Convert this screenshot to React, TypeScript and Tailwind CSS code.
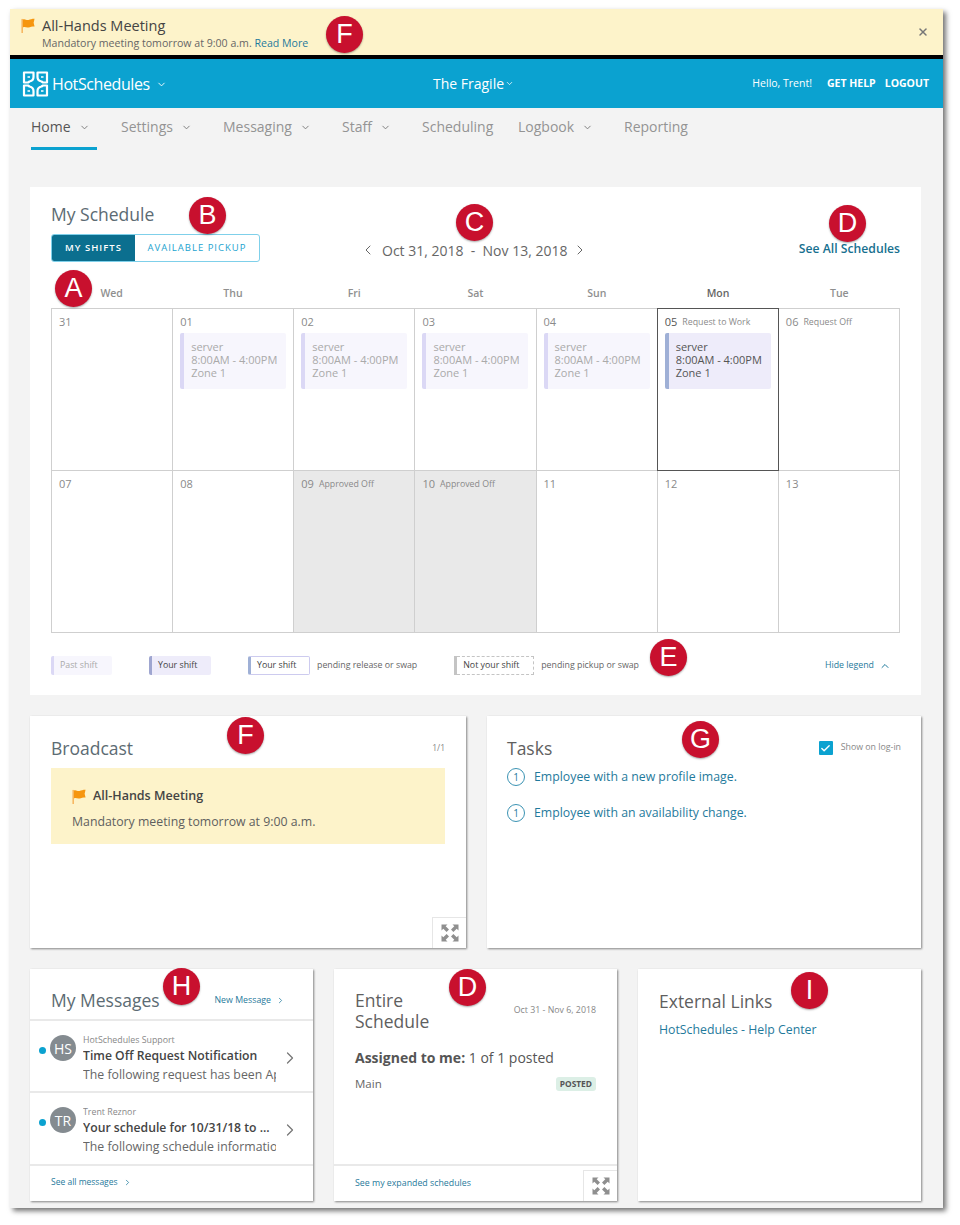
import React from 'react';
import { ChevronDown, ChevronUp, ChevronLeft, ChevronRight, X, Check } from 'lucide-react';

const Badge = ({ label, className }: { label: string; className: string }) => (
    <div className={`absolute flex h-[37px] w-[37px] items-center justify-center rounded-full bg-[#c8102e] text-[27px] leading-none text-white shadow-[0_1px_2px_rgba(0,0,0,0.35)] font-['Liberation_Sans',sans-serif] ${className}`}>
        {label}
    </div>
);

const Flag = ({ className }: { className: string }) => (
    <svg viewBox="0 0 14 16" className={className}>
        <rect x="0" y="1" width="1.6" height="15" fill="#f7b45c" />
        <path d="M1.6 1.5 C4 0.5 5 2.5 7.5 2 C9.5 1.6 11 0.8 14 0.8 L13 5 L14 9 C11 9 9.5 9.6 7.5 10 C5 10.5 4 9 1.6 10 Z" fill="#f6960f" />
    </svg>
);

const Logo = () => (
    <svg viewBox="0 0 26 26" className="h-[26px] w-[27px]" fill="none" stroke="#fff" strokeWidth="2.2" strokeLinejoin="round">
        <path d="M1.5 1.5 H11 V6 C11 8.5 9.5 10 7 10.5 L5.5 11.5 H1.5 Z" />
        <path d="M24.5 1.5 H15 V6 C15 8.5 16.5 10 19 10.5 L20.5 11.5 H24.5 Z" />
        <path d="M1.5 24.5 H11 V20 C11 17.5 9.5 16 7 15.5 L5.5 14.5 H1.5 Z" />
        <path d="M24.5 24.5 H15 V20 C15 17.5 16.5 16 19 15.5 L20.5 14.5 H24.5 Z" />
        <path d="M5 6 H7.5 M21 6 H18.5 M5 20 H7.5 M21 20 H18.5" strokeWidth="1.6" />
    </svg>
);

const Expand = () => (
    <svg viewBox="0 0 18 18" className="h-[18px] w-[18px]" fill="#8f8f8f">
        <path d="M0.5 0.5 H6.5 L4.7 2.3 L8 5.6 L5.6 8 L2.3 4.7 L0.5 6.5 Z" />
        <path d="M17.5 0.5 H11.5 L13.3 2.3 L10 5.6 L12.4 8 L15.7 4.7 L17.5 6.5 Z" />
        <path d="M0.5 17.5 H6.5 L4.7 15.7 L8 12.4 L5.6 10 L2.3 13.3 L0.5 11.5 Z" />
        <path d="M17.5 17.5 H11.5 L13.3 15.7 L10 12.4 L12.4 10 L15.7 13.3 L17.5 11.5 Z" />
    </svg>
);

const tabs = [
    { name: 'Home', w: 'w-[90px]', arrow: true },
    { name: 'Settings', w: 'w-[102px]', arrow: true },
    { name: 'Messaging', w: 'w-[119px]', arrow: true },
    { name: 'Staff', w: 'w-[80px]', arrow: true },
    { name: 'Scheduling', w: 'w-[96px]', arrow: false },
    { name: 'Logbook', w: 'w-[106px]', arrow: true },
    { name: 'Reporting', w: 'w-[80px]', arrow: false },
];

type Day = { d: string; note?: string; shift?: boolean; now?: boolean; off?: boolean };

const days: Day[] = [
    { d: '31' },
    { d: '01', shift: true },
    { d: '02', shift: true },
    { d: '03', shift: true },
    { d: '04', shift: true },
    { d: '05', note: 'Request to Work', shift: true, now: true },
    { d: '06', note: 'Request Off' },
    { d: '07' },
    { d: '08' },
    { d: '09', note: 'Approved Off', off: true },
    { d: '10', note: 'Approved Off', off: true },
    { d: '11' },
    { d: '12' },
    { d: '13' },
];

const heads = ['Wed', 'Thu', 'Fri', 'Sat', 'Sun', 'Mon', 'Tue'];

const DayCell = ({ day }: { day: Day }) => (
    <div className={`relative h-[162px] border-b border-r border-[#cfcfcf] px-[7px] pt-[5px] ${day.off ? 'bg-[#e9e9e9]' : 'bg-white'}`}>
        {day.now && <div className="absolute -bottom-px -left-px -right-px -top-px z-10 border border-[#555]" />}
        <div className="flex h-[17px] items-center">
            <span className={`text-[11px] ${day.now ? 'text-[#555]' : 'text-[#8a8a8a]'}`}>{day.d}</span>
            {day.note && <span className="ml-[5px] text-[8.8px] text-[#8a8a8a]">{day.note}</span>}
        </div>
        {day.shift && (
            <div className={`mt-[2px] h-[56px] w-[106px] rounded-[2px] border-l-[4px] pl-[7px] pt-[7px] text-[11px] leading-[13px] ${day.now ? 'border-[#9fb0d6] bg-[#eeecfa] text-[#555]' : 'border-[#dbd8f5] bg-[#f7f6fd] text-[#aaa]'}`}>
                <div>server</div>
                <div>8:00AM - 4:00PM</div>
                <div>Zone 1</div>
            </div>
        )}
    </div>
);

const Message = ({ ini, from, title, body, h }: { ini: string; from: string; title: string; body: string; h: string }) => (
    <div className={`flex items-start border-b-2 border-[#e9e9e9] pl-[9px] pt-[13px] ${h}`}>
        <div className="mt-[13px] h-[7px] w-[7px] shrink-0 rounded-full bg-[#0ba2d0]" />
        <div className="ml-[4px] mt-[1px] flex h-[26px] w-[26px] shrink-0 items-center justify-center rounded-full bg-[#848b90] text-[14px] text-white">{ini}</div>
        <div className="ml-[7px] w-[193px] shrink-0 overflow-hidden">
            <div className="text-[8.8px] leading-[12px] text-[#888]">{from}</div>
            <div className="whitespace-nowrap text-[12.2px] font-semibold leading-[20px] text-[#444]">{title}</div>
            <div className="whitespace-nowrap text-[12.3px] leading-[17px] text-[#666]">{body}</div>
        </div>
        <ChevronRight className="ml-[4px] mt-[14px] h-[20px] w-[20px] shrink-0 text-[#777]" strokeWidth={1.5} />
    </div>
);

export default function App() {
    return (
        <div className="relative h-[1225px] w-[960px] overflow-hidden bg-white pl-[10px] pt-[9px] font-['Open_Sans',sans-serif]">
            <div className="relative h-[1199px] w-[933px] bg-[#f3f3f3] shadow-[3px_3px_5px_rgba(0,0,0,0.55)]">
                <div className="flex h-[46px] items-start justify-between bg-[#fdf3ca] pl-[11px] pr-[14px] pt-[7px]">
                    <div className="flex">
                        <Flag className="mt-[2px] h-[15px] w-[14px]" />
                        <div className="ml-[7px]">
                            <div className="text-[14.5px] leading-[19px] text-[#444]">All-Hands Meeting</div>
                            <div className="mt-px text-[10.6px] leading-[15px] text-[#666]">Mandatory meeting tomorrow at 9:00 a.m. <span className="text-[#1f7a9c]">Read More</span></div>
                        </div>
                    </div>
                    <X className="mt-[10px] h-[12px] w-[12px] text-[#777]" strokeWidth={3} />
                </div>
                <div className="h-[4px] bg-black" />
                <div className="flex h-[49px] items-center bg-[#0ba2d0] pl-[12px] pr-[14px] text-white">
                    <div className="flex w-[411px] items-center">
                        <Logo />
                        <span className="ml-[3px] text-[16px] tracking-[-0.4px]">HotSchedules</span>
                        <ChevronDown className="ml-[6px] mt-[2px] h-[11px] w-[11px]" />
                    </div>
                    <div className="flex items-center text-[14px]">
                        The Fragile
                        <ChevronDown className="ml-[1px] h-[9px] w-[9px]" />
                    </div>
                    <div className="ml-auto flex items-center text-[10.5px]">
                        <span>Hello, Trent!</span>
                        <span className="ml-[15px] font-bold">GET HELP</span>
                        <span className="ml-[9px] font-bold">LOGOUT</span>
                    </div>
                </div>
                <div className="flex pl-[21px]">
                    {tabs.map((t, i) => (
                        <div key={t.name} className={t.w}>
                            <div className={`flex h-[42px] items-center border-b-[3px] pb-[3px] text-[14px] ${i === 0 ? 'w-[66px] border-[#0ba2d0] text-[#555]' : 'border-transparent text-[#949494]'}`}>
                                {t.name}
                                {t.arrow && <ChevronDown className="ml-[8px] mt-[2px] h-[11px] w-[11px] text-[#777]" />}
                            </div>
                        </div>
                    ))}
                </div>

                <div className="ml-[20px] mt-[37px] h-[508px] w-[891px] bg-white px-[21px] pt-[18px]">
                    <div className="flex h-[29px] items-start">
                        <h2 className="-mt-px text-[17.5px] leading-[21px] text-[#5c6b73]">My Schedule</h2>
                    </div>
                    <div className="flex h-[28px] items-center">
                        <div className="flex h-[28px] w-[209px] overflow-hidden rounded-[3px] border border-[#7fd0ea] pt-0 text-[9.5px] tracking-[1px]">
                            <div className="flex w-[83px] items-center justify-center bg-[#0b6f8f] pt-px font-semibold text-white">MY SHIFTS</div>
                            <div className="flex flex-1 items-center justify-center pt-px text-[#1ba3cf]">AVAILABLE PICKUP</div>
                        </div>
                        <div className="ml-[100px] mt-[4px] flex items-center text-[14px] text-[#666]">
                            <ChevronLeft className="h-[16px] w-[16px]" strokeWidth={1.5} />
                            <span className="ml-[6px] whitespace-pre">Oct 31, 2018  -  Nov 13, 2018</span>
                            <ChevronRight className="ml-[5px] h-[16px] w-[16px]" strokeWidth={1.5} />
                        </div>
                        <div className="ml-auto mt-[2px] text-[12.2px] font-semibold text-[#17708f]">See All Schedules</div>
                    </div>
                    <div className="mt-[18px] grid h-[28px] grid-cols-7 items-center text-center text-[10.5px] font-semibold text-[#8f8f8f]">
                        {heads.map(h => (
                            <div key={h} className={h === 'Mon' ? 'text-[#666]' : ''}>{h}</div>
                        ))}
                    </div>
                    <div className="grid w-[849px] grid-cols-7 border-l border-t border-[#cfcfcf]">
                        {days.map(d => <DayCell key={d.d} day={d} />)}
                    </div>
                    <div className="mt-[23px] flex h-[19px] items-center text-[8.8px] text-[#555]">
                        <div className="flex h-[19px] w-[61px] items-center rounded-[2px] border-l-[3px] border-[#dbd8f5] bg-[#f7f6fd] pl-[6px] text-[#aaa]">Past shift</div>
                        <div className="ml-[37px] flex h-[19px] w-[62px] items-center rounded-[2px] border-l-[3px] border-[#9fa6d0] bg-[#eeecfa] pl-[6px] text-[#444]">Your shift</div>
                        <div className="ml-[37px] flex h-[19px] w-[62px] items-center rounded-[2px] border border-l-[3px] border-[#cdcbef] border-l-[#9fb0d6] pl-[6px] text-[#444]">Your shift</div>
                        <span className="ml-[7px] text-[#666]">pending release or swap</span>
                        <div className="ml-[37px] flex h-[19px] w-[80px]">
                            <div className="w-[3px] bg-[#c4c4c4]" />
                            <div className="flex flex-1 items-center border border-l-0 border-dashed border-[#c4c4c4] pl-[6px] text-[#444]">Not your shift</div>
                        </div>
                        <span className="ml-[7px] text-[#666]">pending pickup or swap</span>
                        <div className="ml-auto mr-[9px] flex items-center text-[#1f7a9c]">
                            Hide legend
                            <ChevronUp className="ml-[5px] h-[12px] w-[12px]" />
                        </div>
                    </div>
                </div>

                <div className="ml-[20px] mt-[21px] flex w-[891px] gap-[21px]">
                    <div className="relative h-[232px] w-[436px] bg-white px-[21px] pt-[20px] shadow-[1px_1px_2px_rgba(0,0,0,0.45)]">
                        <div className="flex items-center justify-between">
                            <h2 className="text-[17.5px] leading-[24px] text-[#5c6b73]">Broadcast</h2>
                            <span className="text-[8.5px] text-[#888]">1/1</span>
                        </div>
                        <div className="mt-[8px] h-[76px] bg-[#fdf3ca] pl-[21px] pt-[19px]">
                            <div className="flex items-center text-[12.5px] font-semibold text-[#444]">
                                <Flag className="mr-[7px] h-[15px] w-[14px]" />
                                All-Hands Meeting
                            </div>
                            <div className="mt-[7px] text-[12.3px] text-[#5f5f5f]">Mandatory meeting tomorrow at 9:00 a.m.</div>
                        </div>
                        <div className="absolute bottom-0 right-0 flex h-[31px] w-[34px] items-center justify-center border-l border-t border-[#e6e6e6] bg-white">
                            <Expand />
                        </div>
                    </div>
                    <div className="h-[232px] w-[434px] bg-white px-[20px] pt-[20px] shadow-[1px_1px_2px_rgba(0,0,0,0.45)]">
                        <div className="flex items-center justify-between">
                            <h2 className="text-[17.5px] leading-[24px] text-[#5f5f5f]">Tasks</h2>
                            <div className="flex items-center text-[8.8px] text-[#888]">
                                <span className="flex h-[14px] w-[14px] items-center justify-center rounded-[1px] bg-[#0ba2d0]">
                                    <Check className="h-[11px] w-[11px] text-white" strokeWidth={3} />
                                </span>
                                <span className="ml-[8px]">Show on log-in</span>
                            </div>
                        </div>
                        {['Employee with a new profile image.', 'Employee with an availability change.'].map((t, i) => (
                            <div key={t} className={`flex h-[18px] items-center text-[12.3px] text-[#1f7a9c] ${i === 0 ? 'mt-[8px]' : 'mt-[18px]'}`}>
                                <span className="flex h-[18px] w-[18px] items-center justify-center rounded-full border border-[#3b93b3] text-[10px]">1</span>
                                <span className="ml-[9px]">{t}</span>
                            </div>
                        ))}
                    </div>
                </div>

                <div className="ml-[20px] mt-[21px] flex w-[891px] gap-[21px]">
                    <div className="h-[232px] w-[283px] bg-white shadow-[1px_1px_2px_rgba(0,0,0,0.45)]">
                        <div className="flex h-[52px] items-center justify-between border-b-2 border-[#e9e9e9] pl-[21px] pr-[28px] pt-[12px]">
                            <h2 className="text-[17.5px] text-[#5c6b73]">My Messages</h2>
                            <div className="mt-[1px] flex items-center text-[8.8px] text-[#1f7a9c]">
                                New Message
                                <ChevronRight className="ml-[5px] h-[9px] w-[9px]" />
                            </div>
                        </div>
                        <Message h="h-[72px]" ini="HS" from="HotSchedules Support" title="Time Off Request Notification" body="The following request has been Approved" />
                        <Message h="h-[73px]" ini="TR" from="Trent Reznor" title="Your schedule for 10/31/18 to ..." body="The following schedule information" />
                        <div className="flex h-[33px] items-center pl-[21px] text-[8.5px] text-[#1f7a9c]">
                            See all messages
                            <ChevronRight className="ml-[5px] h-[9px] w-[9px]" />
                        </div>
                    </div>
                    <div className="relative flex h-[232px] w-[283px] flex-col bg-white shadow-[1px_1px_2px_rgba(0,0,0,0.45)]">
                        <div className="flex-1 px-[21px] pt-[21px]">
                            <div className="flex items-center justify-between">
                                <h2 className="text-[17.5px] leading-[21px] text-[#5f5f5f]">Entire<br />Schedule</h2>
                                <span className="text-[8.8px] text-[#888]">Oct 31 - Nov 6, 2018</span>
                            </div>
                            <div className="mt-[15px] text-[14px] text-[#555]"><span className="font-bold">Assigned to me:</span> 1 of 1 posted</div>
                            <div className="mt-[7px] flex items-center justify-between text-[11.5px] text-[#666]">
                                Main
                                <span className="rounded-[3px] bg-[#dcefe6] px-[4px] py-[1px] text-[8.4px] font-bold leading-[12px] text-[#555]">POSTED</span>
                            </div>
                        </div>
                        <div className="flex h-[37px] items-center border-t-2 border-[#e9e9e9] pl-[21px] text-[8.8px] text-[#1f7a9c]">See my expanded schedules</div>
                        <div className="absolute bottom-0 right-0 flex h-[31px] w-[34px] items-center justify-center border-l border-t border-[#e6e6e6] bg-white">
                            <Expand />
                        </div>
                    </div>
                    <div className="h-[232px] w-[283px] bg-white px-[21px] pt-[20px] shadow-[1px_1px_2px_rgba(0,0,0,0.45)]">
                        <h2 className="text-[17.5px] leading-[24px] text-[#5f5f5f]">External Links</h2>
                        <div className="mt-[8px] text-[12.3px] text-[#1f7a9c]">HotSchedules - Help Center</div>
                    </div>
                </div>
            </div>

            <Badge label="F" className="left-[326px] top-[16px]" />
            <Badge label="B" className="left-[189px] top-[197px]" />
            <Badge label="C" className="left-[456px] top-[204px]" />
            <Badge label="D" className="left-[829px] top-[205px]" />
            <Badge label="A" className="left-[55px] top-[270px]" />
            <Badge label="E" className="left-[650px] top-[639px]" />
            <Badge label="F" className="left-[227px] top-[717px]" />
            <Badge label="G" className="left-[682px] top-[721px]" />
            <Badge label="H" className="left-[163px] top-[968px]" />
            <Badge label="D" className="left-[449px] top-[969px]" />
            <Badge label="I" className="left-[791px] top-[972px]" />
        </div>
    );
}
